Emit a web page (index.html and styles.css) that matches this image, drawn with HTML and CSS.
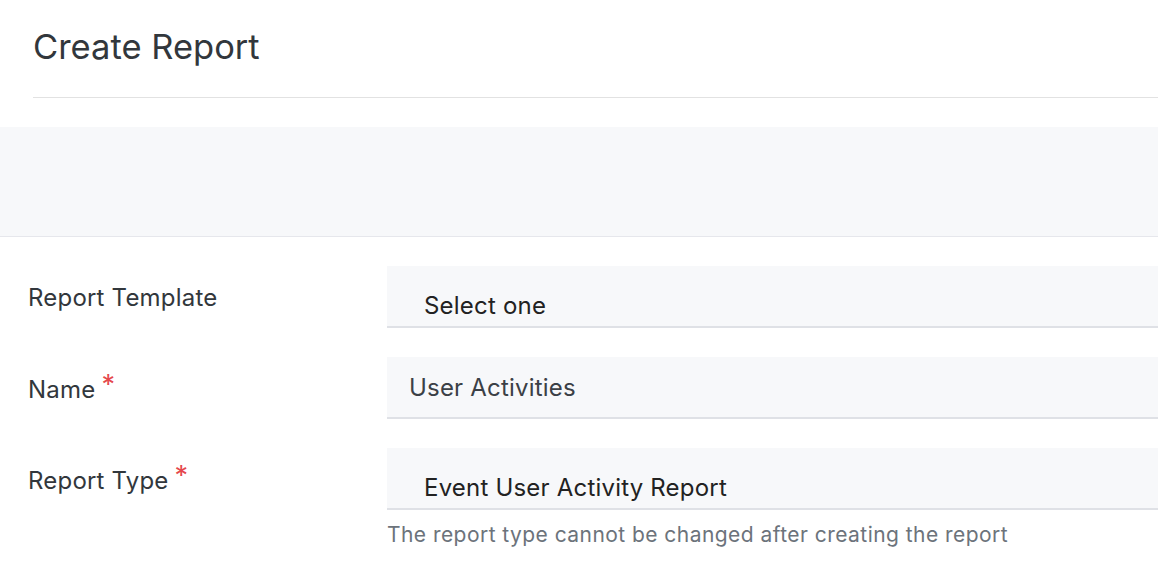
FILE: index.html
```html
<!DOCTYPE html>
<html lang="en">
<head>
    <meta charset="UTF-8">
    <meta name="viewport" content="width=device-width, initial-scale=1.0">
    <title>Create Report</title>
    <link rel="stylesheet" href="styles.css">
</head>
<body>
    <div class="header">
        <h1>Create Report</h1>
    </div>
    <div class="band"></div>
    <form class="form">
        <div class="row">
            <label class="label">Report Template</label>
            <div class="field">
                <div class="input select">Select one</div>
            </div>
        </div>
        <div class="row">
            <label class="label">Name<span class="req">*</span></label>
            <div class="field">
                <div class="input">User Activities</div>
            </div>
        </div>
        <div class="row">
            <label class="label">Report Type<span class="req">*</span></label>
            <div class="field">
                <div class="input select">Event User Activity Report</div>
                <div class="help">The report type cannot be changed after creating the report</div>
            </div>
        </div>
    </form>
</body>
</html>
```

FILE: styles.css
```css
body {
    margin: 0;
    font-family: Inter, "Noto Sans", sans-serif;
    color: #32373c;
    background-color: #fff;
}

.header {
    margin-left: 33px;
    padding-top: 26px;
    border-bottom: 1px solid #e2e2e2;
    height: 98px;
    box-sizing: border-box;
}

.header h1 {
    margin: 0;
    font-size: 34.5px;
    font-weight: 400;
    line-height: 42px;
}

.band {
    margin-top: 29px;
    height: 109px;
    background-color: #f7f8fa;
    border-bottom: 1px solid #e6e7ec;
}

.form {
    padding-top: 29px;
}

.row {
    display: flex;
    margin-bottom: 29px;
}

.row + .row + .row {
    margin-top: 1px;
}

.label {
    width: 359px;
    padding-left: 28px;
    padding-top: 17px;
    font-size: 24px;
    line-height: 30px;
    letter-spacing: 0.2px;
    box-sizing: content-box;
}

.req {
    color: #e5484d;
    font-size: 27px;
    margin-left: 6px;
    position: relative;
    top: -4px;
}

.field {
    flex: 1;
}

.input {
    height: 62px;
    box-sizing: border-box;
    background-color: #f7f8fa;
    border-bottom: 2px solid #dfe1e6;
    padding: 16px 22px 0;
    font-size: 24px;
    line-height: 30px;
    letter-spacing: 0.2px;
    color: #3b4046;
}

.input.select {
    padding: 25px 37px 0;
    color: #222;
}

.help {
    margin-top: 12px;
    font-size: 21px;
    letter-spacing: 0.45px;
    color: #6c737b;
}
```
